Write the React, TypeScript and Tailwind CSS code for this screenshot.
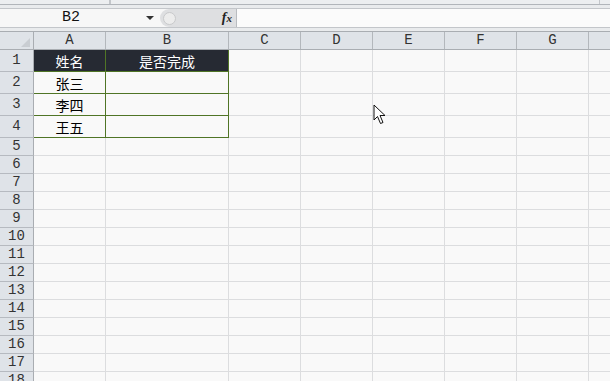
import React from "react";

const COLS = ["A", "B", "C", "D", "E", "F", "G", ""];
const COL_W = ["w-[72px]", "w-[123px]", "w-[72px]", "w-[72px]", "w-[72px]", "w-[72px]", "w-[72px]", "flex-1"];

const DATA: Record<number, string[]> = {
  1: ["姓名", "是否完成"],
  2: ["张三", ""],
  3: ["李四", ""],
  4: ["王五", ""],
};

const Cursor = () => (
  <svg className="absolute left-[373px] top-[104px]" width="14" height="21" viewBox="0 0 14 21">
    <path
      d="M1 1 L1 16 L4.5 12.5 L7.5 19.5 L10 18.5 L7 11.5 L12 11.5 Z"
      fill="#ffffff"
      stroke="#111111"
      strokeWidth="1"
      strokeLinejoin="miter"
    />
  </svg>
);

const FormulaBar = () => (
  <div className="flex h-[20px] border-y border-[#c3c6ca] bg-[#f7f7f7]">
    <div className="relative flex w-[160px] items-center justify-center pr-[18px] font-['Liberation_Mono',monospace] text-[15px] text-[#111]">
      B2
      <span className="absolute right-[6px] top-[7px] h-0 w-0 border-x-[4px] border-t-[4px] border-x-transparent border-t-[#333]" />
    </div>
    <div className="flex w-[77px] items-center rounded-l-full border-r border-[#b9bcc0] bg-[#dedfe1]">
      <span className="ml-[3px] h-[13px] w-[13px] rounded-full border border-[#c8c9cb] bg-[#ececec]" />
      <span className="ml-auto mr-[4px] font-['Liberation_Serif',serif] text-[14px] font-bold italic leading-none text-[#222]">
        f<span className="text-[11px]">x</span>
      </span>
    </div>
    <div className="flex-1 bg-[#fbfbfb]" />
  </div>
);

const HeaderRow = () => (
  <div className="flex h-[19px] border-y border-[#a9adb2] bg-[#dfe3e8] font-['Liberation_Mono',monospace] text-[14px] text-[#333]">
    <div className="relative w-[34px] border-r border-[#a9adb2]">
      <svg className="absolute bottom-[2px] right-[3px]" width="9" height="9" viewBox="0 0 9 9">
        <path d="M9 0 L9 9 L0 9 Z" fill="#c9cdd2" />
      </svg>
    </div>
    {COLS.map((c, i) => (
      <div
        key={i}
        className={`${COL_W[i]} flex items-center justify-center ${i < 7 ? "border-r border-[#b3b7bc]" : ""}`}
      >
        {c}
      </div>
    ))}
  </div>
);

const Row = ({ n }: { n: number }) => {
  const tall = n <= 4;
  const data = DATA[n];
  return (
    <div className={`flex ${tall ? "h-[22px]" : "h-[18px]"}`}>
      <div className="flex w-[34px] items-center justify-center border-r border-b border-r-[#a9adb2] border-b-[#b6bac0] bg-[#dfe3e8] font-['Liberation_Mono',monospace] text-[14px] text-[#333]">
        {n}
      </div>
      {COLS.map((_, i) => {
        const inTable = data && i < 2;
        const dark = n === 1 && i < 2;
        return (
          <div
            key={i}
            className={`${COL_W[i]} flex items-center justify-center border-b font-['Noto_Sans_CJK_SC',sans-serif] text-[14px] leading-none ${
              i < 7 ? "border-r" : ""
            } ${inTable ? "border-[#507526]" : "border-[#dcdddf]"} ${
              dark ? "bg-[#262a33] text-white" : "text-black"
            }`}
          >
            {data && i < 2 ? data[i] : ""}
          </div>
        );
      })}
    </div>
  );
};

export default function App() {
  const rows = Array.from({ length: 19 }, (_, i) => i + 1);
  return (
    <div className="relative h-[381px] w-[610px] overflow-hidden bg-[#f9f9f9]">
      <div className="flex h-[5px] border-b border-[#b1b5ba] bg-[#eceef0]">
        <div className="w-[110px] border-r border-[#c3c6ca]" />
        <div className="w-[490px] border-x border-[#c3c6ca]" />
        <div className="flex-1" />
      </div>
      <div className="h-[3px] bg-[#e9ebed]" />
      <FormulaBar />
      <div className="h-[3px] bg-[#e9ebed]" />
      <HeaderRow />
      {rows.map((n) => (
        <Row key={n} n={n} />
      ))}
      <Cursor />
    </div>
  );
}
